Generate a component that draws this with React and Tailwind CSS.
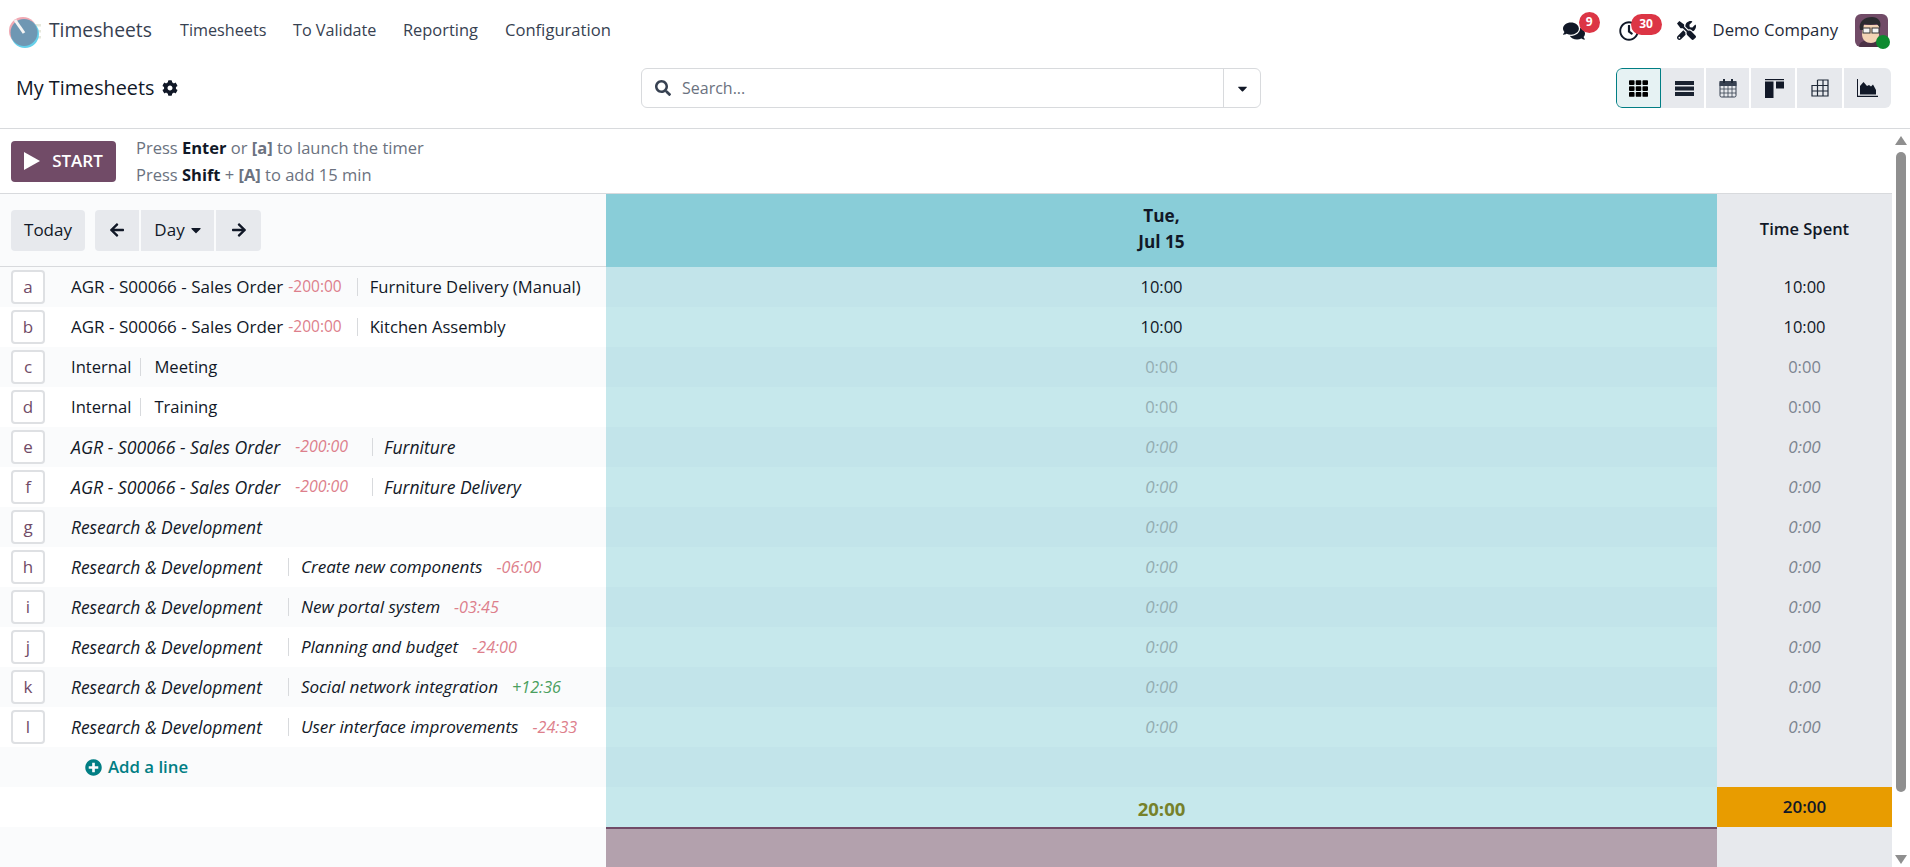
import React from "react";
import {
  FaCaretDown,
  FaArrowLeft,
  FaArrowRight,
  FaCog,
  FaComments,
  FaPlusCircle,
  FaRegClock,
  FaSearch,
  FaTools,
  FaTh,
} from "react-icons/fa";

const rows = [
  { key: "a", name: "AGR - S00066 - Sales Order", delta: "-200:00", task: "Furniture Delivery (Manual)", value: "10:00" },
  { key: "b", name: "AGR - S00066 - Sales Order", delta: "-200:00", task: "Kitchen Assembly", value: "10:00" },
  { key: "c", name: "Internal", task: "Meeting", value: "0:00" },
  { key: "d", name: "Internal", task: "Training", value: "0:00" },
  { key: "e", name: "AGR - S00066 - Sales Order", delta: "-200:00", task: "Furniture", value: "0:00", italic: true },
  { key: "f", name: "AGR - S00066 - Sales Order", delta: "-200:00", task: "Furniture Delivery", value: "0:00", italic: true },
  { key: "g", name: "Research & Development", value: "0:00", italic: true },
  { key: "h", name: "Research & Development", task: "Create new components", taskDelta: "-06:00", value: "0:00", italic: true },
  { key: "i", name: "Research & Development", task: "New portal system", taskDelta: "-03:45", value: "0:00", italic: true },
  { key: "j", name: "Research & Development", task: "Planning and budget", taskDelta: "-24:00", value: "0:00", italic: true },
  { key: "k", name: "Research & Development", task: "Social network integration", taskDelta: "+12:36", up: true, value: "0:00", italic: true },
  { key: "l", name: "Research & Development", task: "User interface improvements", taskDelta: "-24:33", value: "0:00", italic: true },
];

function Logo() {
  return (
    <svg width="34" height="40" viewBox="0 0 34 40">
      <rect x="25" y="13" width="7" height="2.5" fill="#e6e8dc" />
      <rect x="25" y="19" width="7" height="2.5" fill="#e6e8dc" />
      <rect x="25" y="25" width="7" height="2.5" fill="#e6e8dc" />
      <circle cx="14" cy="20" r="14" fill="#f0a9b3" />
      <circle cx="16" cy="23" r="14" fill="#66d0ea" />
      <circle cx="15" cy="21.5" r="13.5" fill="#6f97b3" />
      <path d="M6 9l9 13" stroke="#f4f4f4" strokeWidth="3" />
    </svg>
  );
}

function Avatar() {
  return (
    <div className="relative w-[33px] h-[33px]">
      <svg width="33" height="33" viewBox="0 0 33 33" className="rounded-md">
        <rect width="33" height="33" fill="#714b67" />
        <path d="M4 33c0-5 5-7 10-7s11 2 11 7z" fill="#4b3145" />
        <path d="M7 11h17v9c0 6-4 9-8 9-5 0-9-3-9-9z" fill="#f3d3b5" />
        <path d="M5 16C3 7 10 3 17 3c6 0 10 4 8 11l-3-4c-4 1-9 1-13 0l-1 6z" fill="#2b2b2f" />
        <rect x="8" y="14" width="7" height="5" fill="#f5f5f5" stroke="#333" />
        <rect x="17" y="14" width="7" height="5" fill="#f5f5f5" stroke="#333" />
      </svg>
      <span className="absolute -right-[2px] -bottom-[2px] w-[14px] h-[14px] rounded-full bg-[#0d8a2f]" />
    </div>
  );
}

function ListIcon() {
  return (
    <svg width="19" height="15" viewBox="0 0 19 15" fill="#1a2230">
      <rect width="19" height="4" />
      <rect y="5.500" width="19" height="4" />
      <rect y="11" width="19" height="4" />
    </svg>
  );
}

function CalendarIcon() {
  return (
    <svg width="18" height="20" viewBox="0 0 18 20" fill="none" stroke="#374151">
      <rect x="1" y="3.500" width="16" height="15.500" rx="1.500" fill="#e7e9ed" />
      <rect x="1" y="3.500" width="16" height="4" fill="#374151" />
      <path d="M1 11h16M1 15h16M5 8v11M9 8v11M13 8v11" strokeWidth="0.8" />
      <path d="M5 1v4M13 1v4" strokeWidth="2" stroke="#1f2937" />
    </svg>
  );
}

function KanbanIcon() {
  return (
    <svg width="19" height="19" viewBox="0 0 19 19" fill="#111827">
      <rect width="19" height="1.200" />
      <rect y="2.500" width="8.500" height="16.500" />
      <rect x="11" y="2.500" width="8" height="7" />
    </svg>
  );
}

function PivotIcon() {
  return (
    <svg width="18" height="18" viewBox="0 0 18 18" fill="none" stroke="#1f2937" strokeWidth="1.200">
      <path d="M6.500 1H17v16H1V6.500h16M6.500 1v16M12 1v16M1 12h16" />
    </svg>
  );
}

function AreaIcon() {
  return (
    <svg width="21" height="18" viewBox="0 0 21 18" fill="#111827">
      <path d="M0 0h1v16.800h20V18H0z" />
      <path d="M3 15.500V7l3.500-4 3.500 4 2-1 2 1.500 2-2L19 11v4.500z" />
    </svg>
  );
}

function ViewButton({ children, width, active }) {
  return (
    <button
      className={
        "h-10 flex items-center justify-center " +
        width +
        (active
          ? " bg-[#e6f2f3] border border-[#017e84] rounded-l-md"
          : " bg-[#e7e9ed]")
      }
    >
      {children}
    </button>
  );
}

function Badge({ children, className }) {
  return (
    <span
      className={
        "absolute h-[21px] rounded-full bg-[#dc3545] text-white text-[12px] font-bold flex items-center justify-center " +
        className
      }
    >
      {children}
    </span>
  );
}

function Delta({ value, up, className }) {
  return (
    <span className={(up ? "text-[#4a9f5f] " : "text-[#dd7f8c] ") + className}>
      {value}
    </span>
  );
}

function Sep({ className }) {
  return <span className={"w-px h-[18px] bg-[#d8dadd] " + className} />;
}

function RowLabel({ row }) {
  const isResearch = row.name.startsWith("Research");
  let nameSize = "text-[16.600px]";
  let taskSize = "text-[16.600px]";
  let sepClass = "ml-[9px] mr-[13px]";
  if (row.delta) {
    nameSize = row.italic ? "text-[17.700px]" : "text-[17px]";
    taskSize = row.italic ? "text-[17.500px]" : "text-[16.600px]";
    sepClass = row.italic ? "ml-[24px] mr-[11px]" : "ml-[15px] mr-[12px]";
  }
  if (isResearch) {
    nameSize = "text-[17.400px]";
    taskSize = "text-[17.100px]";
    sepClass = "ml-[26px] mr-[12px]";
  }
  return (
    <div className={"flex items-center h-full pl-[11px] " + (row.italic ? "italic" : "")}>
      <span className="not-italic w-[34px] h-[34px] mr-[26px] shrink-0 flex items-center justify-center border-2 border-[#dee0e3] rounded-[4px] bg-white text-[#714b67] text-[17px]">
        {row.key}
      </span>
      <span className={nameSize}>{row.name}</span>
      {row.delta && (
        <Delta
          value={row.delta}
          className={row.italic ? "ml-[15px] text-[15.900px]" : "ml-[5px] text-[15.500px]"}
        />
      )}
      {row.task && (
        <>
          <Sep className={sepClass} />
          <span className={taskSize}>{row.task}</span>
        </>
      )}
      {row.taskDelta && (
        <Delta value={row.taskDelta} up={row.up} className="ml-[14px] text-[16.200px]" />
      )}
    </div>
  );
}

export default function App() {
  return (
    <div
      className="w-[1910px] h-[867px] overflow-hidden bg-white text-[#111827] text-[16.500px] flex flex-col"
      style={{ fontFamily: '"Open Sans", sans-serif' }}
    >
      <nav className="h-[61px] shrink-0 flex items-center text-[#374151]">
        <div className="ml-[9px] mr-[6px] flex items-center">
          <Logo />
        </div>
        <span className="text-[19.300px] w-[131px]">Timesheets</span>
        <span className="w-[113px] text-[16.200px]">Timesheets</span>
        <span className="w-[110px] text-[16.200px]">To Validate</span>
        <span className="w-[102px] text-[16.400px]">Reporting</span>
        <span className="text-[16.600px]">Configuration</span>
        <div className="ml-auto flex items-center text-[#1f2937]">
          <span className="relative mr-[34px]">
            <FaComments size={22} className="text-[#111827]" />
            <Badge className="w-[21px] -top-[8px] left-[16px]">9</Badge>
          </span>
          <span className="relative mr-[38px]">
            <FaRegClock size={20} className="text-[#111827]" />
            <Badge className="w-[31px] -top-[7px] left-[12px]">30</Badge>
          </span>
          <FaTools size={19} className="text-[#111827] mr-[17px]" />
          <span className="mr-[17px] text-[16.700px] -mt-[2px]">Demo Company</span>
          <span className="mr-[22px]">
            <Avatar />
          </span>
        </div>
      </nav>

      <div className="h-[68px] shrink-0 flex items-start pt-[7px] border-b border-[#d8dadd]">
        <div className="w-[641px] pl-[16px] flex items-center h-10 text-[19.800px] text-[#111827]">
          My Timesheets
          <FaCog size={16} className="ml-[8px]" />
        </div>
        <div className="w-[620px] h-10 flex items-center border border-[#d8dadd] rounded-md">
          <FaSearch size={16} className="ml-[13px] text-[#374151]" />
          <span className="ml-[11px] text-[#6b7280] text-[16px]">Search...</span>
          <span className="ml-auto w-[37px] h-full border-l border-[#d8dadd] flex items-center justify-center">
            <FaCaretDown size={15} />
          </span>
        </div>
        <div className="ml-auto mr-[19px] flex gap-[2px] rounded-md overflow-hidden">
          <ViewButton width="w-[45px]" active>
            <FaTh size={19} className="text-black" />
          </ViewButton>
          <ViewButton width="w-[43px] -ml-[2px] pl-[3px]">
            <ListIcon />
          </ViewButton>
          <ViewButton width="w-[43px]">
            <CalendarIcon />
          </ViewButton>
          <ViewButton width="w-[44px] pl-[2px]">
            <KanbanIcon />
          </ViewButton>
          <ViewButton width="w-[45px]">
            <PivotIcon />
          </ViewButton>
          <ViewButton width="w-[47px]">
            <AreaIcon />
          </ViewButton>
        </div>
      </div>

      <div className="flex-1 flex min-h-0">
        <main className="w-[1892px] flex flex-col">
          <div className="h-[65px] shrink-0 flex items-center border-b border-[#d8dadd] pl-[11px]">
            <button className="w-[105px] h-[41px] rounded-[4px] bg-[#714b67] text-white text-[17px] font-semibold flex items-center justify-center gap-[12px]">
              <svg width="16" height="18" viewBox="0 0 16 18" fill="#fff">
                <path d="M0 0l16 9-16 9z" />
              </svg>
              START
            </button>
            <div className="ml-[20px] text-[16.500px] leading-[27px] text-[#6b7280]">
              <div>
                Press <b className="text-[#111827]">Enter</b> or <b>[a]</b> to launch the timer
              </div>
              <div>
                Press <b className="text-[#111827]">Shift</b> + <b>[A]</b> to add 15 min
              </div>
            </div>
          </div>

          <div className="grid grid-cols-[606px_1111px_175px] grid-rows-[73px_repeat(15,40px)] border-b border-[#d8dadd]">
            <div className="bg-[#fafbfc] border-b border-[#d8dadd] pl-[11px] flex items-center gap-[10px] text-[17px]">
              <button className="w-[74px] h-[41px] rounded-[4px] bg-[#e7e9ed]">Today</button>
              <div className="flex h-[41px] gap-[2px] rounded-[4px] overflow-hidden">
                <button className="w-[44px] bg-[#e7e9ed] flex items-center justify-center">
                  <FaArrowLeft size={16} />
                </button>
                <button className="w-[73px] bg-[#e7e9ed] flex items-center justify-center gap-[3px] pl-[3px]">
                  Day <FaCaretDown size={16} />
                </button>
                <button className="w-[45px] bg-[#e7e9ed] flex items-center justify-center">
                  <FaArrowRight size={16} />
                </button>
              </div>
            </div>
            <div className="bg-[#89cdd8] flex items-center justify-center text-center font-bold leading-[26px] text-[17.200px]">
              <div className="-mt-[3px]">
                Tue,
                <br />
                Jul 15
              </div>
            </div>
            <div className="bg-[#e7e9ed] flex items-center justify-center font-semibold text-[16.500px]">
              <span className="-mt-[2px]">Time Spent</span>
            </div>

            {rows.map((row, i) => (
              <React.Fragment key={row.key}>
                <div className={i % 2 === 0 ? "bg-[#fafbfc]" : "bg-white"}>
                  <RowLabel row={row} />
                </div>
                <div
                  className={
                    "flex items-center justify-center " +
                    (i % 2 === 0 ? "bg-[#c2e4ea] " : "bg-[#c6e8ec] ") +
                    (row.value === "0:00" ? "text-[#94adb2] " : "") +
                    (row.italic ? "italic text-[17px]" : "")
                  }
                >
                  {row.value}
                </div>
                <div
                  className={
                    "bg-[#e7e9ed] flex items-center justify-center " +
                    (row.value === "0:00" ? "text-[#7c8490] " : "") +
                    (row.italic ? "italic text-[17px]" : "")
                  }
                >
                  {row.value}
                </div>
              </React.Fragment>
            ))}

            <div className="bg-[#fafbfc] flex items-center pl-[85px] text-[#017e84] font-semibold text-[16.800px]">
              <FaPlusCircle size={17} className="mr-[6px]" />
              Add a line
            </div>
            <div className="bg-[#c2e4ea]" />
            <div className="bg-[#e7e9ed]" />

            <div className="bg-white" />
            <div className="bg-[#c6e8ec] flex items-center justify-center font-bold text-[#76812a] text-[18.500px]">
              <span className="mt-[3px]">20:00</span>
            </div>
            <div className="bg-[#e89c00] flex items-center justify-center font-semibold text-[17px]">20:00</div>

            <div className="bg-[#fafbfc]" />
            <div className="bg-[#b3a1ad] border-t-2 border-[#714b67]" />
            <div className="bg-[#e7e9ed]" />
          </div>
        </main>

        <div className="w-[18px] flex flex-col items-center pt-[7px] pb-[3px]">
          <span className="w-0 h-0 border-l-[6px] border-r-[6px] border-b-[9px] border-l-transparent border-r-transparent border-b-[#8f8f8f]" />
          <span className="w-[10px] h-[640px] mt-[7px] rounded-full bg-[#8f8f8f]" />
          <span className="mt-auto w-0 h-0 border-l-[6px] border-r-[6px] border-t-[9px] border-l-transparent border-r-transparent border-t-[#8f8f8f]" />
        </div>
      </div>
    </div>
  );
}
